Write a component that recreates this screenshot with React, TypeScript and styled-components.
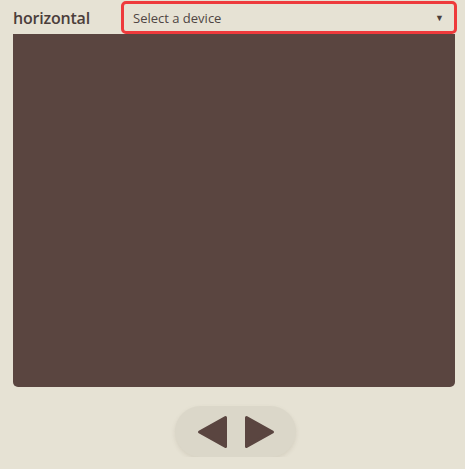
import * as React from "react";
import styled, { createGlobalStyle } from "styled-components";

const Global = createGlobalStyle`
    html, body {
        margin: 0;
        padding: 0;
        background: #e6e2d4;
        font-family: "Open Sans", "Liberation Sans", sans-serif;
    }
`

const Page = styled.div`
    display: flex;
    flex-direction: column;
    padding: 1px 10px 0 13px;
`

const Header = styled.div`
    display: flex;
    align-items: center;
    height: 33px;
`

const Title = styled.h1`
    margin: 0;
    width: 108px;
    font-size: 16px;
    font-weight: 600;
    color: #4b3e3b;
    letter-spacing: -0.2px;
`

const Select = styled.div`
    position: relative;
    flex: 1;
    box-sizing: border-box;
    height: 33px;
    margin-right: -2px;
    border: 3px solid #ee3a3c;
    border-radius: 5px;
    display: flex;
    align-items: center;
    padding-left: 9px;
    font-size: 13px;
    color: #4f4543;
`

const Caret = styled.span`
    position: absolute;
    right: 10px;
    top: 7px;
    font-size: 9px;
    color: #4b3e3b;
`

const Screen = styled.div`
    height: 353px;
    background: #5a4540;
    border-radius: 0 0 5px 5px;
`

const Controls = styled.div`
    display: flex;
    justify-content: center;
    margin-top: 19px;
`

const Pill = styled.div`
    display: flex;
    align-items: center;
    justify-content: center;
    gap: 16px;
    width: 121px;
    height: 51px;
    margin-left: 3px;
    border-radius: 26px;
    background: #dbd7c9;
    box-shadow: 0 2px 4px rgba(120, 110, 90, 0.15);
`

const Arrow = styled.button`
    padding: 0;
    border: 0;
    background: none;
    display: flex;
    cursor: pointer;
`

const Tri = ({ dir }: { dir: "left" | "right" }) => (
    <svg width="31" height="34" viewBox="0 0 31 34">
        {dir === "left" ? (
            <path d="M28.5 2.5 L2.5 17 L28.5 31.5 Z" fill="#5a4540" stroke="#5a4540" strokeWidth="3" strokeLinejoin="round" />
        ) : (
            <path d="M2.5 2.5 L28.5 17 L2.5 31.5 Z" fill="#5a4540" stroke="#5a4540" strokeWidth="3" strokeLinejoin="round" />
        )}
    </svg>
)

export default function App() {
    return (
        <Page>
            <Global />
            <Header>
                <Title>horizontal</Title>
                <Select>
                    Select a device
                    <Caret>▼</Caret>
                </Select>
            </Header>
            <Screen />
            <Controls>
                <Pill>
                    <Arrow><Tri dir="left" /></Arrow>
                    <Arrow><Tri dir="right" /></Arrow>
                </Pill>
            </Controls>
        </Page>
    )
}
